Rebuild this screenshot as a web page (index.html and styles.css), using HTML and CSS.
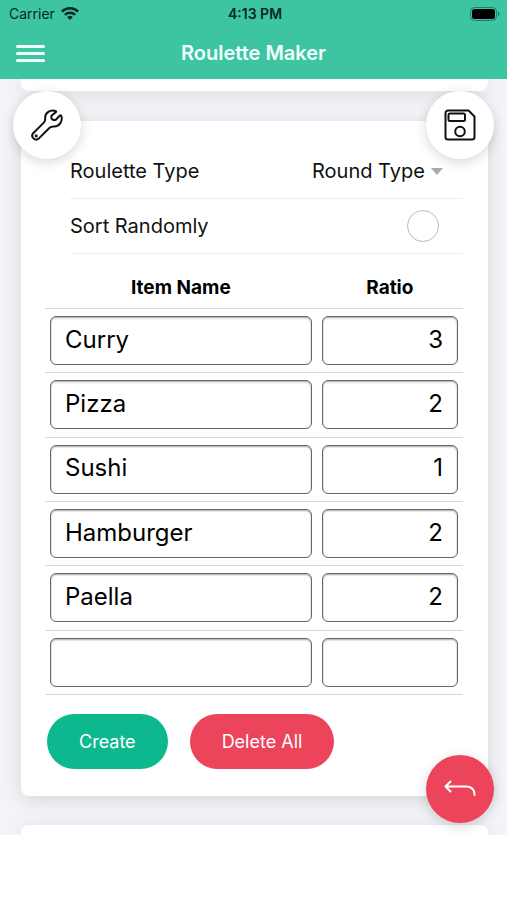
FILE: index.html
```html
<!DOCTYPE html>
<html lang="en">
<head>
<meta charset="utf-8">
<meta name="viewport" content="width=device-width, initial-scale=1">
<title>Roulette Maker</title>
<link rel="stylesheet" href="styles.css">
</head>
<body>
<header class="top">
  <div class="status">
    <span class="carrier">Carrier
      <svg width="18" height="13" viewBox="0 0 18 13" fill="none" stroke="#062a20" stroke-width="2.5" aria-hidden="true"><path d="M.9 4.6a11.6 11.6 0 0 1 16.2 0M3.9 7.8a7.3 7.3 0 0 1 10.2 0"/><path d="M9 13 6.2 10.2a4 4 0 0 1 5.6 0z" fill="#062a20" stroke="none"/></svg>
    </span>
    <span class="clock">4:13 PM</span>
    <svg class="battery" width="31" height="14" viewBox="0 0 31 14" aria-hidden="true"><rect x=".5" y=".5" width="26" height="13" rx="4" fill="none" stroke="#227d66"/><rect x="2" y="2" width="23" height="10" rx="2.5" fill="#000"/><path d="M28 4.800c2 .8 2 3.600 0 4.400z" fill="#227d66"/></svg>
  </div>
  <div class="nav">
    <button class="menu" type="button" aria-label="Menu"><span></span><span></span><span></span></button>
    <h1>Roulette Maker</h1>
  </div>
</header>
<main class="page">
  <section class="card card-before"></section>
  <form class="card editor">
    <div class="settings">
      <div class="setting">
        <label for="type">Roulette Type</label>
        <span class="picker"><select id="type"><option>Round Type</option></select></span>
      </div>
      <div class="setting">
        <label for="sort">Sort Randomly</label>
        <input class="tick" id="sort" type="checkbox">
      </div>
    </div>
    <table class="items">
      <thead><tr><th class="name" scope="col">Item Name</th><th scope="col">Ratio</th></tr></thead>
      <tbody>
        <tr><td><input aria-label="Item name 1" value="Curry"></td><td><input class="ratio" aria-label="Ratio 1" value="3"></td></tr>
        <tr><td><input aria-label="Item name 2" value="Pizza"></td><td><input class="ratio" aria-label="Ratio 2" value="2"></td></tr>
        <tr><td><input aria-label="Item name 3" value="Sushi"></td><td><input class="ratio" aria-label="Ratio 3" value="1"></td></tr>
        <tr><td><input aria-label="Item name 4" value="Hamburger"></td><td><input class="ratio" aria-label="Ratio 4" value="2"></td></tr>
        <tr><td><input aria-label="Item name 5" value="Paella"></td><td><input class="ratio" aria-label="Ratio 5" value="2"></td></tr>
        <tr><td><input aria-label="Item name 6"></td><td><input class="ratio" aria-label="Ratio 6"></td></tr>
      </tbody>
    </table>
    <div class="actions">
      <button class="pill create" type="button">Create</button>
      <button class="pill delete" type="button">Delete All</button>
    </div>
  </form>
  <section class="card card-after"></section>
  <button class="fab tools" type="button" aria-label="Tools">
    <svg width="32" height="32" viewBox="0 0 32 32" fill="none" stroke="#111" stroke-width="2" stroke-linejoin="round" stroke-linecap="round"><path d="M24.500 2C19.500.200 13.800 3.600 14.200 9.200c.1 2-.3 3.300-1.400 4.400L2.200 24.200c-3 3.600 1.900 8.400 5.500 5.400l10.900-10.800c1.100-1.100 2.400-1.500 4.400-1.400 5.600.2 9-5.600 7.300-10.400-.3-.9-1-.9-1.600-.3l-3.900 4c-3.200 1.200-5.300-.9-4.200-4.200l4.200-3.300c.6-.5.5-1-.3-1.200z"/><circle cx="5.200" cy="26.800" r=".6"/></svg>
  </button>
  <button class="fab save" type="button" aria-label="Save">
    <svg width="32" height="32" viewBox="0 0 32 32" fill="none" stroke="#111" stroke-width="2" stroke-linejoin="round"><path d="M4 1.500h20.500l6 6V28a2.500 2.500 0 0 1-2.500 2.500H4A2.500 2.500 0 0 1 1.500 28V4A2.500 2.500 0 0 1 4 1.500z"/><rect x="4.500" y="4.500" width="16.500" height="7.500" rx="1.500"/><circle cx="16" cy="22.500" r="4.800"/></svg>
  </button>
  <button class="fab back" type="button" aria-label="Back">
    <svg width="32" height="18" viewBox="0 0 32 18" fill="none" stroke="#fff" stroke-width="2" stroke-linecap="round" stroke-linejoin="round"><path d="M6.500 1.500 1.500 6.500 6.500 11.500M1.500 6.500H22c5.500 0 8.500 3 8.500 8.500"/></svg>
  </button>
</main>
</body>
</html>
```
FILE: styles.css
```css
* { box-sizing: border-box; }
body {
  margin: 0;
  background: #fff;
  color: #111;
  font: 20px/24px Inter, "Liberation Sans", sans-serif;
}
button, input, select { font: inherit; color: inherit; }
button { border: 0; padding: 0; cursor: pointer; }

.top { background: #3dc5a2; height: 79px; }
.status {
  display: grid;
  grid-template-columns: 1fr auto 1fr;
  align-items: center;
  height: 27px;
  padding: 0 6px 0 9px;
  font-size: 14px;
  line-height: 16px;
  color: #062a20;
}
.carrier { display: flex; align-items: center; gap: 6px; }
.clock { font-weight: 600; }
.battery { justify-self: end; }
.nav {
  display: grid;
  grid-template-columns: 30px 1fr 30px;
  align-items: center;
  height: 52px;
  padding: 0 16px;
}
.menu {
  display: flex;
  flex-direction: column;
  gap: 4px;
  background: none;
}
.menu span { width: 29px; height: 3px; border-radius: 2px; background: #effff9; }
.nav h1 {
  margin: 0;
  color: #f2fffb;
  font-size: 20px;
  font-weight: 600;
  text-align: center;
}

.page { position: relative; background: #f3f4f7; overflow: hidden; }
.card {
  margin: 0 19px 0 21px;
  background: #fff;
  border-radius: 8px;
  box-shadow: 0 4px 20px rgba(0, 0, 0, 0.12);
}
.card-before { height: 12px; border-radius: 0 0 8px 8px; }
.editor { margin-top: 30px; margin-bottom: 29px; padding: 23px 25px 27px 24px; }
.card-after { height: 10px; border-radius: 8px 8px 0 0; }

.settings { padding-left: 25px; }
.setting {
  display: flex;
  align-items: center;
  justify-content: space-between;
  height: 55px;
  border-bottom: 1px solid #ededed;
}
.picker { display: flex; align-items: center; gap: 6px; padding-right: 20px; }
.picker::after {
  content: "";
  border: 6px solid transparent;
  border-top: 7px solid #aaa;
  border-bottom: 0;
}
.picker select { appearance: none; border: 0; padding: 0; background: none; }
.tick {
  appearance: none;
  width: 32px;
  height: 32px;
  margin: 0 24px 0 0;
  border: 1px solid #bbb;
  border-radius: 50%;
  background: #fff;
}

.items { width: 100%; height: 441px; border-collapse: separate; border-spacing: 0; table-layout: fixed; }
.items th {
  height: 55px;
  padding: 13px 5px 0;
  border-bottom: 1px solid #d8d8d8;
  font-size: 19px;
  font-weight: 700;
  color: #000;
}
.items .name { width: 65%; }
.items td { padding: 0 5px; border-bottom: 1px solid #d8d8d8; vertical-align: middle; }
.items input {
  display: block;
  width: 100%;
  height: 49px;
  padding: 0 14px 3px;
  border: 1px solid #666;
  border-radius: 6px;
  background: #fff;
  box-shadow: inset 0 1px 2px rgba(0, 0, 0, 0.35);
  font-size: 24px;
  color: #000;
}
.items .ratio { text-align: right; }

.actions { display: flex; gap: 22px; padding: 19px 2px 0; }
.pill {
  height: 55px;
  padding: 0 32px;
  border-radius: 28px;
  color: #fff;
  font-size: 18px;
}
.create { background: #0db88e; }
.delete { background: #eb445b; }

.fab {
  position: absolute;
  display: grid;
  place-items: center;
  width: 68px;
  height: 68px;
  border-radius: 50%;
  background: #fff;
  box-shadow: 0 3px 12px rgba(0, 0, 0, 0.16);
}
.tools { top: 12px; left: 13px; }
.save { top: 12px; right: 13px; }
.back { bottom: 12px; right: 13px; background: #eb445b; }
```
